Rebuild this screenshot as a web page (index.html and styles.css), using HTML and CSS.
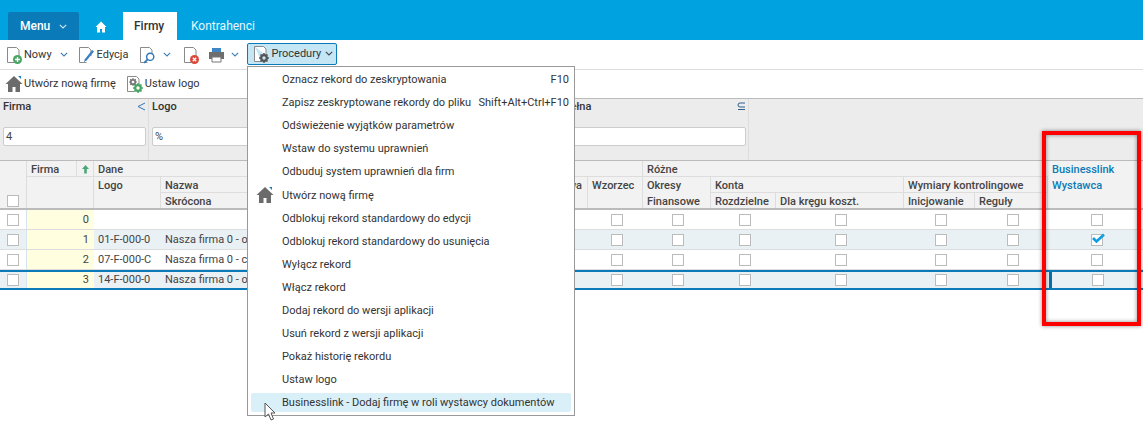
FILE: index.html
```html
<!DOCTYPE html>
<html lang="pl">
<head>
<meta charset="utf-8">
<title>Firmy</title>
<link rel="stylesheet" href="styles.css">
</head>
<body>
<svg class="defs" width="0" height="0">
  <defs>
    <symbol id="doc" viewBox="0 0 16 18"><path d="M1.500 1.500h9l2.500 2.500v6M1.500 1.500v15h7" fill="#fff" stroke="#8a8a8a" stroke-width="1"/></symbol>
    <symbol id="house" viewBox="0 0 18 18"><path d="M9 1 0.500 9H3v8h4.500v-5h3v5H15V9h2.500z" fill="#6b6b6b"/><path d="M13 1h3v3z" fill="#1f7fc4"/></symbol>
    <symbol id="gear" viewBox="0 0 10 10"><circle cx="5" cy="5" r="2.800" fill="none" stroke="currentColor" stroke-width="2.200"/><path d="M5 0v2M5 8v2M0 5h2M8 5h2M1.500 1.500l1.400 1.400M7.100 7.100l1.400 1.400M8.500 1.500 7.100 2.900M2.900 7.100 1.500 8.500" stroke="currentColor" stroke-width="1.500"/></symbol>
    <symbol id="caret" viewBox="0 0 8 5"><path d="M.8.800 4 4l3.200-3.200" fill="none" stroke="currentColor" stroke-width="1.100"/></symbol>
  </defs>
</svg>

<header class="topbar">
  <button class="menu-btn">Menu <svg class="caret-w"><use href="#caret"/></svg></button>
  <span class="home-tab"><svg class="home-ico" viewBox="0 0 12 12"><path d="M6 .500 .500 6H2v5.500h3V8h2v3.500h3V6h1.500z" fill="#fff"/></svg></span>
  <span class="tab tab-active">Firmy</span>
  <span class="tab">Kontrahenci</span>
</header>

<div class="toolbar">
  <span class="tool tool-new">
    <span class="ico"><svg class="doc"><use href="#doc"/></svg><svg class="badge" viewBox="0 0 8 8"><circle cx="4" cy="4" r="4" fill="#4aa564"/><path d="M4 1.800v4.400M1.800 4h4.400" stroke="#fff" stroke-width="1.200"/></svg></span>
    Nowy <svg class="caret"><use href="#caret"/></svg>
  </span>
  <span class="tool tool-edit">
    <span class="ico"><svg class="doc"><use href="#doc"/></svg><svg class="pen" viewBox="0 0 12 14"><path d="M10 1 2 11l-1 3 3-1.500 8-10z" fill="#3a7fc1"/></svg></span>
    Edycja
  </span>
  <span class="tool tool-find">
    <span class="ico"><svg class="doc"><use href="#doc"/></svg><svg class="lens" viewBox="0 0 10 10"><circle cx="6" cy="4" r="3" fill="#fff" stroke="#2f77b8" stroke-width="1.200"/><path d="M3.800 6.200 1 9" stroke="#2f77b8" stroke-width="1.500"/></svg></span>
    <svg class="caret"><use href="#caret"/></svg>
  </span>
  <span class="tool tool-del">
    <span class="ico"><svg class="doc"><use href="#doc"/></svg><svg class="badge" viewBox="0 0 8 8"><circle cx="4" cy="4" r="4" fill="#d9483b"/><path d="M2.500 2.500l3 3M5.500 2.500l-3 3" stroke="#fff" stroke-width="1.100"/></svg></span>
  </span>
  <span class="tool tool-print">
    <svg class="printer" viewBox="0 0 17 16"><path d="M4 1h9v4H4z" fill="#3f86c6"/><path d="M1 5h15v7h-3v-2H4v2H1z" fill="#6e6e6e"/><path d="M4 10h9v5H4z" fill="#fff" stroke="#777"/></svg>
    <svg class="caret"><use href="#caret"/></svg>
  </span>
  <span class="tool tool-proc">
    <span class="ico"><svg class="doc"><use href="#doc"/></svg><svg class="gear"><use href="#gear"/></svg></span>
    Procedury <svg class="caret"><use href="#caret"/></svg>
  </span>
</div>

<div class="subbar">
  <span class="sub sub-new"><svg class="house"><use href="#house"/></svg>Utwórz nową firmę</span>
  <span class="sub sub-logo">
    <span class="ico"><svg class="doc"><use href="#doc"/></svg><svg class="gear-gray"><use href="#gear"/></svg><svg class="gear-green"><use href="#gear"/></svg></span>
    Ustaw logo
  </span>
</div>

<section class="filters">
  <div class="filter f-firma">
    <div class="f-label">Firma <svg class="lt" viewBox="0 0 9 9"><path d="M8 1 1 4.500 8 8" fill="none" stroke="#2f77b8"/></svg></div>
    <div class="f-input">4</div>
  </div>
  <div class="filter f-logo">
    <div class="f-label">Logo</div>
    <div class="f-input">%</div>
  </div>
  <div class="filter f-pelna">
    <div class="f-label">Nazwa pełna <svg class="le" viewBox="0 0 9 9"><path d="M8 1H3a2 2 0 0 0 0 4h5M1 7.500h7" fill="none" stroke="#2f5f8f"/></svg></div>
    <div class="f-input"></div>
  </div>
  <div class="f-rest"></div>
</section>

<section class="grid">
  <div class="ghead">
    <div class="gh c-check"><span class="box"></span></div>
    <div class="gh c-firma">Firma</div>
    <div class="gh c-arrow"><svg class="up" viewBox="0 0 9 10"><path d="M4.500 1 1 5h2.200v4.500h2.600V5H8z" fill="#4aa878"/></svg></div>
    <div class="gh c-firma-b"></div>
    <div class="gh c-dane">Dane</div>
    <div class="gh c-logo">Logo</div>
    <div class="gh c-nazwa">Nazwa</div>
    <div class="gh c-skrot">Skrócona</div>
    <div class="gh c-podst">Podstawowa</div>
    <div class="gh c-wzor">Wzorzec</div>
    <div class="gh c-rozne">Różne</div>
    <div class="gh c-okres">Okresy</div>
    <div class="gh c-finan">Finansowe</div>
    <div class="gh c-konta">Konta</div>
    <div class="gh c-rozdz">Rozdzielne</div>
    <div class="gh c-krag">Dla kręgu koszt.</div>
    <div class="gh c-wymiary">Wymiary kontrolingowe</div>
    <div class="gh c-inic">Inicjowanie</div>
    <div class="gh c-reg">Reguły</div>
    <div class="gh c-bl"><span>Businesslink</span><span>Wystawca</span></div>
  </div>

  <div class="grow">
    <div class="cell chk first"><span class="box"></span></div><div class="cell num">0</div><div class="cell txt"></div><div class="cell txt"></div>
    <div class="cell chk"><span class="box"></span></div><div class="cell chk"><span class="box"></span></div><div class="cell chk"><span class="box"></span></div><div class="cell chk"><span class="box"></span></div><div class="cell chk"><span class="box"></span></div><div class="cell chk"><span class="box"></span></div><div class="cell chk bl"><span class="box"></span></div>
  </div>
  <div class="grow alt">
    <div class="cell chk first"><span class="box"></span></div><div class="cell num">1</div><div class="cell txt">01-F-000-0</div><div class="cell txt">Nasza firma 0 - oddział</div>
    <div class="cell chk"><span class="box"></span></div><div class="cell chk"><span class="box"></span></div><div class="cell chk"><span class="box"></span></div><div class="cell chk"><span class="box"></span></div><div class="cell chk"><span class="box"></span></div><div class="cell chk"><span class="box"></span></div><div class="cell chk bl"><span class="box"><svg class="tick" viewBox="0 0 13 10"><path d="M1 5l3.500 3.500L12 1.500" fill="none" stroke="#0f9fe0" stroke-width="2.600"/></svg></span></div>
  </div>
  <div class="grow">
    <div class="cell chk first"><span class="box"></span></div><div class="cell num">2</div><div class="cell txt">07-F-000-C</div><div class="cell txt">Nasza firma 0 - centrala</div>
    <div class="cell chk"><span class="box"></span></div><div class="cell chk"><span class="box"></span></div><div class="cell chk"><span class="box"></span></div><div class="cell chk"><span class="box"></span></div><div class="cell chk"><span class="box"></span></div><div class="cell chk"><span class="box"></span></div><div class="cell chk bl"><span class="box"></span></div>
  </div>
  <div class="grow alt selected">
    <div class="cell chk first"><span class="box"></span></div><div class="cell num">3</div><div class="cell txt">14-F-000-0</div><div class="cell txt">Nasza firma 0 - oddział</div>
    <div class="cell chk"><span class="box"></span></div><div class="cell chk"><span class="box"></span></div><div class="cell chk"><span class="box"></span></div><div class="cell chk"><span class="box"></span></div><div class="cell chk"><span class="box"></span></div><div class="cell chk"><span class="box"></span></div><div class="cell chk focus"><span class="box"></span></div>
  </div>
</section>

<nav class="dropdown">
  <div class="mi"><span>Oznacz rekord do zeskryptowania</span><span>F10</span></div>
  <div class="mi"><span>Zapisz zeskryptowane rekordy do pliku</span><span>Shift+Alt+Ctrl+F10</span></div>
  <div class="mi"><span>Odświeżenie wyjątków parametrów</span></div>
  <div class="mi"><span>Wstaw do systemu uprawnień</span></div>
  <div class="mi"><span>Odbuduj system uprawnień dla firm</span></div>
  <div class="mi mi-house"><svg class="mi-ico"><use href="#house"/></svg><span>Utwórz nową firmę</span></div>
  <div class="mi"><span>Odblokuj rekord standardowy do edycji</span></div>
  <div class="mi"><span>Odblokuj rekord standardowy do usunięcia</span></div>
  <div class="mi"><span>Wyłącz rekord</span></div>
  <div class="mi"><span>Włącz rekord</span></div>
  <div class="mi"><span>Dodaj rekord do wersji aplikacji</span></div>
  <div class="mi"><span>Usuń rekord z wersji aplikacji</span></div>
  <div class="mi"><span>Pokaż historię rekordu</span></div>
  <div class="mi"><span>Ustaw logo</span></div>
  <div class="mi hover"><span>Businesslink - Dodaj firmę w roli wystawcy dokumentów</span></div>
</nav>

<svg class="cursor" viewBox="0 0 12 20"><path d="M1 1v14l3.500-3 2.500 6 2.500-1-2.500-6H11z" fill="#fff" stroke="#555"/></svg>
<div class="callout"></div>
</body>
</html>
```
FILE: styles.css
```css
* { box-sizing: border-box; }
html, body { margin: 0; height: 428px; overflow: hidden; background: #fff; }
body { position: relative; font: 11px/16px Roboto, "Liberation Sans", sans-serif; color: #333; }
.defs { position: absolute; }

.topbar { height: 40px; background: #00a3e0; display: flex; align-items: flex-end; padding-left: 8px; }
.menu-btn { width: 71px; height: 28px; border: 0; border-radius: 2px 2px 0 0; background: #0a7bb8; color: #fff; font: 500 12px Roboto, sans-serif; padding: 0 0 0 12px; text-align: left; }
.caret-w { width: 8px; height: 5px; margin-left: 6px; color: #cfe8f6; vertical-align: 1px; }
.home-tab { width: 44px; height: 28px; display: flex; align-items: center; justify-content: center; }
.home-ico { width: 12px; height: 12px; margin: 2px 1px 0 0; }
.tab { height: 28px; line-height: 28px; padding: 0 14px; color: #e6f6fd; font-size: 12px; }
.tab-active { background: #fff; color: #333; font-weight: 500; width: 54px; padding: 0 11px; }

.toolbar { height: 30px; display: flex; align-items: center; padding-left: 6px; border-bottom: 1px solid #ddd; position: relative; }
.tool { display: flex; align-items: center; height: 22px; }
.ico { position: relative; display: block; width: 16px; height: 18px; flex: none; }
.doc { position: absolute; left: 0; top: 0; width: 16px; height: 18px; }
.badge { position: absolute; left: 7px; top: 9px; width: 9px; height: 9px; }
.pen { position: absolute; left: 5px; top: 2px; width: 11px; height: 15px; }
.lens { position: absolute; left: 4px; top: 6px; width: 12px; height: 12px; }
.gear { position: absolute; left: 6px; top: 8px; width: 10px; height: 10px; color: #555; }
.gear-gray { position: absolute; left: 3px; top: 3px; width: 8px; height: 8px; color: #777; }
.gear-green { position: absolute; left: 7px; top: 8px; width: 10px; height: 10px; color: #4aa564; }
.caret { width: 8px; height: 5px; color: #3a7fb5; }
.tool-new .ico { margin-right: 2px; }
.tool-new .caret { margin-left: 8px; }
.tool-edit { margin-left: 10px; }
.tool-edit .ico { margin-right: 3px; }
.tool-find { margin-left: 11px; }
.tool-find .caret { margin-left: 8px; }
.tool-del { margin-left: 12px; }
.tool-print { margin-left: 9px; }
.printer { width: 17px; height: 16px; }
.tool-print .caret { margin-left: 6px; }
.tool-proc { margin-left: 8px; width: 90px; height: 22px; margin-top: -2px; padding-left: 5px; background: #c5e6f5; border: 1px solid #0a7bb8; border-radius: 2px; }
.tool-proc .ico { margin-right: 2px; }
.tool-proc .caret { margin-left: 4px; color: #445; }

.subbar { height: 28px; display: flex; align-items: center; padding-left: 5px; }
.sub { display: flex; align-items: center; }
.house { width: 18px; height: 18px; margin-right: 1px; }
.sub-logo { margin-left: 10px; }
.sub-logo .ico { margin-right: 3px; }

.filters { height: 63px; display: grid; grid-template-columns: 149px 376px 224px 1fr; background: #ececec; border-top: 1px solid #bbb; border-bottom: 1px solid #bbb; }
.filter { border-right: 1px solid #ddd; padding: 0 2px 0 3px; }
.f-label { height: 28px; padding: 1px 0 0; line-height: 14px; font-weight: 500; display: flex; justify-content: space-between; color: #333; }
.lt { width: 9px; height: 9px; margin: 2px 0 0; }
.le { width: 9px; height: 9px; margin: 2px 0 0; }
.f-input { height: 19px; border: 1px solid #ccc; border-radius: 2px; background: #fff; padding-left: 2px; line-height: 17px; color: #444; }
.f-logo .f-input { margin-right: -3px; }

.ghead { display: grid; grid-template-columns: 27px 50px 17px 67px 344px 83px 55px 68px 65px 128px 71px 73px 95px; grid-template-rows: 16px 16px 15px; height: 49px; background: #f2f2f2; border-bottom: 2px solid #bbb; font-weight: 500; color: #444; }
.gh { padding: 1px 4px 0; line-height: 15px; border-right: 1px solid #ddd; border-bottom: 1px solid #ddd; white-space: nowrap; overflow: hidden; }
.c-check { grid-column: 1; grid-row: 1 / 4; border-bottom: 0; display: flex; align-items: flex-end; padding: 0 0 1px 7px; }
.c-firma { grid-column: 2; grid-row: 1; }
.c-arrow { grid-column: 3; grid-row: 1; padding: 3px 0 0 4px; }
.up { display: block; width: 9px; height: 10px; }
.c-firma-b { grid-column: 2 / 4; grid-row: 2 / 4; border-bottom: 0; }
.c-dane { grid-column: 4 / 8; grid-row: 1; }
.c-logo { grid-column: 4; grid-row: 2 / 4; border-bottom: 0; }
.c-nazwa { grid-column: 5; grid-row: 2; }
.c-skrot { grid-column: 5; grid-row: 3; border-bottom: 0; }
.c-podst { grid-column: 6; grid-row: 2 / 4; border-bottom: 0; text-align: right; padding-right: 5px; }
.c-wzor { grid-column: 7; grid-row: 2 / 4; border-bottom: 0; }
.c-rozne { grid-column: 8 / 14; grid-row: 1; border-right: 0; }
.c-okres { grid-column: 8; grid-row: 2; border-bottom: 0; }
.c-finan { grid-column: 8; grid-row: 3; border-bottom: 0; }
.c-konta { grid-column: 9 / 11; grid-row: 2; }
.c-rozdz { grid-column: 9; grid-row: 3; border-bottom: 0; }
.c-krag { grid-column: 10; grid-row: 3; border-bottom: 0; }
.c-wymiary { grid-column: 11 / 13; grid-row: 2; }
.c-inic { grid-column: 11; grid-row: 3; border-bottom: 0; }
.c-reg { grid-column: 12; grid-row: 3; border-bottom: 0; }
.c-bl { grid-column: 13; grid-row: 1 / 4; border: 0; background: #f2f2f2; color: #0a7bb8; display: flex; flex-direction: column; line-height: 16px; }

.grow { display: grid; grid-template-columns: 27px 67px 67px 427px 55px 68px 65px 128px 71px 73px 95px; height: 20px; border-bottom: 1px solid #ddd; color: #444; }
.alt { background: #eaf1f5; }
.selected { border-top: 2px solid #0a7bb8; border-bottom: 2px solid #0a7bb8; }
.cell { line-height: 19px; white-space: nowrap; overflow: hidden; }
.selected .cell { line-height: 16px; }
.txt { padding-left: 4px; }
.num { background: #ffffe0; text-align: right; padding-right: 5px; }
.chk { display: flex; align-items: center; justify-content: center; padding-left: 2px; }
.chk.first { border-right: 1px solid #d5e3f0; padding-left: 0; }
.chk.bl { padding-left: 3px; }
.chk.focus { margin-left: 1px; padding-left: 0; border-left: 3px solid #0a6fa8; }
.box { position: relative; display: block; width: 12px; height: 12px; border: 1px solid #bbb; background: #fff; flex: none; }
.tick { position: absolute; left: 0; top: -2px; width: 13px; height: 10px; }

.dropdown { position: absolute; left: 247px; top: 66px; width: 328px; height: 350px; padding: 1px 3px; background: #fff; border: 1px solid #999; color: #333; }
.mi { position: relative; height: 23px; padding: 3px 2px 2px 31px; line-height: 18px; display: flex; justify-content: space-between; white-space: nowrap; }
.mi-house { height: 24px; padding-top: 4px; }
.mi-ico { position: absolute; left: 5px; top: 3px; width: 18px; height: 18px; }
.hover { margin-top: 2px; height: 19px; padding-top: 1px; padding-bottom: 0; background: #daf0f9; border-radius: 2px; }

.cursor { position: absolute; left: 264px; top: 402px; width: 12px; height: 20px; }
.callout { position: absolute; left: 1042px; top: 131px; width: 99px; height: 195px; border: 4px solid #f00; box-shadow: 0 0 4px rgba(0,0,0,.45), inset 0 0 4px rgba(0,0,0,.45); }
```
